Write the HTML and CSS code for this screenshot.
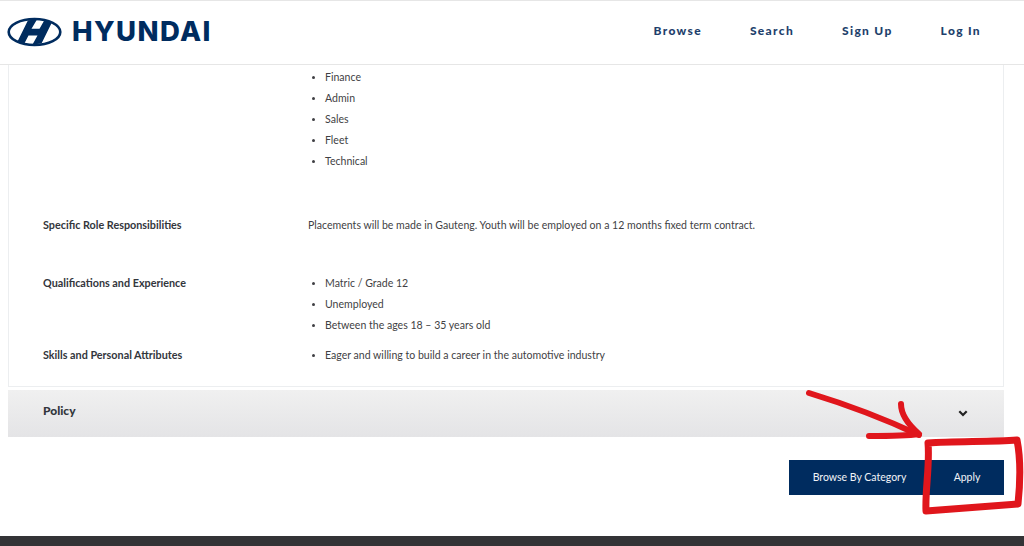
FILE: index.html
```html
<!DOCTYPE html>
<html lang="en">
<head>
<meta charset="utf-8">
<title>Hyundai</title>
<link rel="stylesheet" href="styles.css">
</head>
<body>
<header class="header">
  <a class="brand">
    <svg class="logo" viewBox="0 0 56 30" width="56" height="30" aria-hidden="true">
      <ellipse cx="27.500" cy="15" rx="25.800" ry="13" fill="none" stroke="#002c5f" stroke-width="2.600"/>
      <path d="M21 3.200 30 2.500 24.500 11.800H32.500L37.500 3 45 5.200 34.500 26.500 25.500 27.500 30.500 18.500H21.500L17.500 26.200 10.500 24.500Z" fill="#002c5f"/>
    </svg>
    <span class="wordmark">HYUNDAI</span>
  </a>
  <nav class="nav">
    <a>Browse</a>
    <a>Search</a>
    <a>Sign Up</a>
    <a>Log In</a>
  </nav>
</header>
<main class="main">
  <section class="panel">
    <div class="row row-roles">
      <div class="label"></div>
      <ul class="list">
        <li>Finance</li>
        <li>Admin</li>
        <li>Sales</li>
        <li>Fleet</li>
        <li>Technical</li>
      </ul>
    </div>
    <div class="row row-resp">
      <div class="label">Specific Role Responsibilities</div>
      <p class="value">Placements will be made in Gauteng. Youth will be employed on a 12 months fixed term contract.</p>
    </div>
    <div class="row row-qual">
      <div class="label">Qualifications and Experience</div>
      <ul class="list">
        <li>Matric / Grade 12</li>
        <li>Unemployed</li>
        <li>Between the ages 18 – 35 years old</li>
      </ul>
    </div>
    <div class="row row-skills">
      <div class="label">Skills and Personal Attributes</div>
      <ul class="list">
        <li>Eager and willing to build a career in the automotive industry</li>
      </ul>
    </div>
  </section>
  <div class="accordion">
    <span class="accordion-title">Policy</span>
    <svg class="chevron" viewBox="0 0 10 7" width="10" height="7" aria-hidden="true">
      <path d="M1.300 1.300 5 5l3.700-3.700" fill="none" stroke="#222" stroke-width="2.200"/>
    </svg>
  </div>
  <div class="actions">
    <a class="btn btn-browse">Browse By Category</a>
    <a class="btn btn-apply">Apply</a>
  </div>
</main>
<footer class="footer"></footer>
<svg class="scribble" viewBox="0 0 1024 546" width="1024" height="546" aria-hidden="true">
  <g fill="none" stroke="#e0161c" stroke-linecap="round" stroke-linejoin="round">
    <path d="M809 393C845 404 885 419 919 435" stroke-width="6"/>
    <path d="M901 404C901 417 911 427 919 434C905 436 885 436 869 436" stroke-width="6"/>
    <path d="M928 443C955 441 990 442 1017 440C1021 460 1020 485 1018 504C990 506 955 509 926 511C925 490 930 465 928 443Z" stroke-width="7"/>
  </g>
</svg>
</body>
</html>
```
FILE: styles.css
```css
* { box-sizing: border-box; }
html, body { margin: 0; padding: 0; }
body {
  width: 1024px;
  height: 546px;
  overflow: hidden;
  background: #fff;
  font-family: "Lato", "Open Sans", sans-serif;
  color: #3f3f44;
  position: relative;
  display: flex;
  flex-direction: column;
}
.header {
  height: 65px;
  flex: none;
  display: flex;
  justify-content: space-between;
  align-items: center;
  padding: 0 43px 0 7px;
  border-top: 1px solid #e6e6e6;
  border-bottom: 1px solid #e6e6e6;
}
.brand { display: flex; align-items: center; gap: 9px; }
.logo { display: block; margin-top: -1px; }
.wordmark {
  font-family: "Inter", sans-serif;
  font-weight: 800;
  font-size: 27.500px;
  letter-spacing: 1.400px;
  color: #002c5f;
  line-height: 1;
  margin-top: -1px;
}
.nav { display: flex; gap: 48px; margin-top: -4px; }
.nav a {
  font-size: 12px;
  font-weight: 900;
  letter-spacing: 1.320px;
  color: #1e3f6c;
}
.main { flex: 1; display: flex; flex-direction: column; padding: 0 20px 0 8px; }
.panel {
  height: 322px;
  border: 1px solid #eceef0;
  border-top: 0;
  padding: 0 34px;
}
.row { display: flex; font-size: 10.550px; }
.label { width: 265px; flex: none; font-weight: 700; color: #33363c; font-size: 10.800px; line-height: 21px; }
.list { margin: 0; padding: 0 0 0 17px; list-style: disc; }
.list li { height: 21px; line-height: 21px; }
.list li::marker { font-size: 9px; }
.value { margin: 0; line-height: 21px; }
.row-roles { padding-top: 2px; height: 149px; }
.row-resp { height: 58px; }
.row-resp .value, .row-qual .list, .row-skills .list { margin-top: 1px; }
.row-qual { height: 72px; }
.accordion {
  margin-top: 3px;
  height: 47px;
  flex: none;
  display: flex;
  justify-content: space-between;
  align-items: center;
  padding: 0 36px 0 35px;
  background: linear-gradient(#f0f0f0, #e4e4e6);
}
.accordion-title { font-size: 12px; font-weight: 900; color: #33363c; margin-top: -7px; }
.chevron { display: block; margin-top: 0; }
.actions { display: flex; justify-content: flex-end; margin-top: 23px; }
.btn {
  height: 35px;
  display: flex;
  align-items: center;
  justify-content: center;
  padding-bottom: 2px;
  background: #002c5f;
  color: #f0f3f7;
  font-size: 10.500px;
}
.btn-browse { width: 141px; }
.btn-apply { width: 74px; }
.footer { height: 10px; flex: none; background: #333336; }
.scribble { position: absolute; left: 0; top: 0; pointer-events: none; }
```
